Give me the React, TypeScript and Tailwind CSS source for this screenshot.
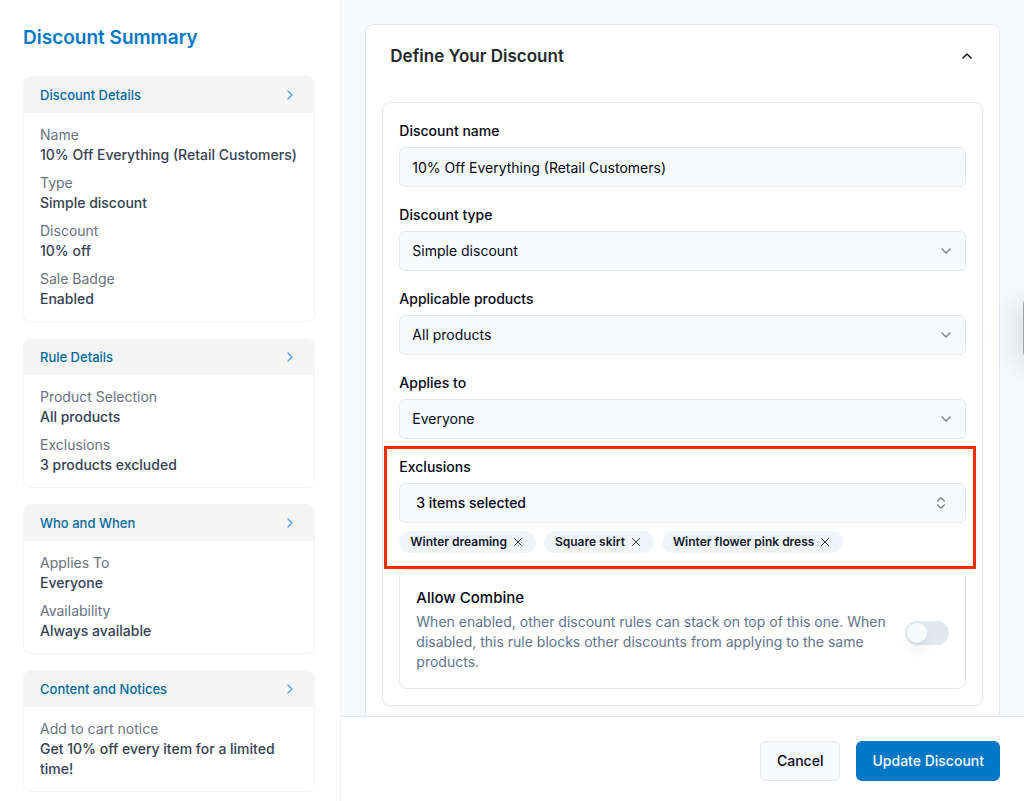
import { useState } from "react";
import { ChevronDown, ChevronRight, ChevronsUpDown, ChevronUp, X } from "lucide-react";

type SummarySection = {
  title: string;
  rows: { label: string; value: string }[];
};

const sections: SummarySection[] = [
  {
    title: "Discount Details",
    rows: [
      { label: "Name", value: "10% Off Everything (Retail Customers)" },
      { label: "Type", value: "Simple discount" },
      { label: "Discount", value: "10% off" },
      { label: "Sale Badge", value: "Enabled" },
    ],
  },
  {
    title: "Rule Details",
    rows: [
      { label: "Product Selection", value: "All products" },
      { label: "Exclusions", value: "3 products excluded" },
    ],
  },
  {
    title: "Who and When",
    rows: [
      { label: "Applies To", value: "Everyone" },
      { label: "Availability", value: "Always available" },
    ],
  },
  {
    title: "Content and Notices",
    rows: [{ label: "Add to cart notice", value: "Get 10% off every item for a limited time!" }],
  },
];

function SummaryCard({ title, rows }: SummarySection) {
  return (
    <section className="overflow-hidden rounded-lg border border-neutral-100">
      <button type="button" className="flex h-9 w-full items-center justify-between bg-neutral-100 px-4 text-left">
        <span className="text-[13px] leading-5 font-medium text-[#0369a1]">{title}</span>
        <ChevronRight className="size-4 text-blue-400" />
      </button>
      <dl className="flex flex-col gap-2 px-4 py-3 text-sm">
        {rows.map((row) => (
          <div key={row.label}>
            <dt className="text-gray-500">{row.label}</dt>
            <dd className="font-medium text-gray-700">{row.value}</dd>
          </div>
        ))}
      </dl>
    </section>
  );
}

function SelectField({ id, label, options }: { id: string; label: string; options: string[] }) {
  return (
    <div className="flex flex-col gap-1">
      <label htmlFor={id} className="text-sm leading-6 font-medium">
        {label}
      </label>
      <div className="relative">
        <select
          id={id}
          className="h-10 w-full appearance-none rounded-md border border-slate-200 bg-slate-50 px-3 text-sm"
        >
          {options.map((option) => (
            <option key={option}>{option}</option>
          ))}
        </select>
        <ChevronDown className="pointer-events-none absolute top-3 right-3 size-4 opacity-50" />
      </div>
    </div>
  );
}

export default function App() {
  const [name, setName] = useState("10% Off Everything (Retail Customers)");
  const [excluded, setExcluded] = useState(["Winter dreaming", "Square skirt", "Winter flower pink dress"]);
  const [combine, setCombine] = useState(false);

  return (
    <div className="relative flex h-screen overflow-hidden bg-white font-[Inter,sans-serif] text-slate-950">
      <aside className="w-1/3 shrink-0 overflow-hidden border-r border-slate-100 py-6 pr-[25px] pl-[23px]">
        <h2 className="mb-6 text-[19px] leading-7 font-semibold text-[#0078c5]">Discount Summary</h2>
        <div className="flex flex-col gap-4">
          {sections.map((section) => (
            <SummaryCard key={section.title} {...section} />
          ))}
        </div>
      </aside>

      <div className="flex min-w-0 flex-1 flex-col">
        <main className="min-h-0 flex-1 overflow-y-auto bg-slate-50 p-6 [scrollbar-width:none]">
          <div className="rounded-lg border border-slate-200 bg-white">
            <button type="button" className="flex h-[61px] w-full items-center justify-between px-6">
              <span className="text-[17px] leading-7 font-semibold text-[#23282d]">Define Your Discount</span>
              <ChevronUp className="size-4" />
            </button>

            <div className="p-4">
              <form className="flex flex-col gap-4 rounded-lg border border-slate-200 p-4 shadow-xs">
                <div className="flex flex-col gap-1">
                  <label htmlFor="name" className="text-sm leading-6 font-medium">
                    Discount name
                  </label>
                  <input
                    id="name"
                    type="text"
                    value={name}
                    onChange={(e) => setName(e.target.value)}
                    className="h-10 w-full rounded-md border border-slate-200 bg-slate-50 px-3 text-sm"
                  />
                </div>

                <SelectField id="type" label="Discount type" options={["Simple discount"]} />
                <SelectField id="products" label="Applicable products" options={["All products"]} />
                <SelectField id="audience" label="Applies to" options={["Everyone"]} />

                <div className="relative flex flex-col gap-1">
                  <label htmlFor="exclusions" className="text-sm leading-6 font-medium">
                    Exclusions
                  </label>
                  <button
                    id="exclusions"
                    type="button"
                    className="flex h-10 w-full items-center justify-between rounded-md border border-slate-200 bg-slate-50 px-4 text-sm font-medium"
                  >
                    {excluded.length} items selected
                    <ChevronsUpDown className="size-4 opacity-50" />
                  </button>
                  <div className="flex flex-wrap gap-2 pt-1">
                    {excluded.map((item) => (
                      <span
                        key={item}
                        className="flex items-center gap-1 rounded-full border border-transparent bg-slate-100 px-2.5 py-0.5 text-xs font-semibold text-slate-900"
                      >
                        {item}
                        <button
                          type="button"
                          aria-label={`Remove ${item}`}
                          onClick={() => setExcluded(excluded.filter((other) => other !== item))}
                        >
                          <X className="size-3.5" strokeWidth={1.5} />
                        </button>
                      </span>
                    ))}
                  </div>
                  <div className="pointer-events-none absolute -top-[9px] -right-[10px] -bottom-4 -left-[15px] z-10 border-3 border-[#ff2a00]" />
                </div>

                <div className="flex items-center justify-between gap-4 rounded-lg border border-slate-200 p-4">
                  <div className="flex flex-col gap-0.5">
                    <label htmlFor="combine" className="text-[15px] leading-6 font-medium">
                      Allow Combine
                    </label>
                    <p className="text-sm text-slate-500">
                      When enabled, other discount rules can stack on top of this one. When disabled, this rule blocks
                      other discounts from applying to the same products.
                    </p>
                  </div>
                  <div className="flex shrink-0 pt-2">
                    <input
                      id="combine"
                      type="checkbox"
                      role="switch"
                      checked={combine}
                      onChange={(e) => setCombine(e.target.checked)}
                      className="h-6 w-11 appearance-none rounded-full bg-slate-200 p-0.5 before:block before:size-5 before:rounded-full before:bg-slate-50 before:shadow-lg checked:bg-[#0078c5] checked:before:translate-x-5"
                    />
                  </div>
                </div>
              </form>
            </div>
          </div>
        </main>

        <footer className="flex justify-end gap-4 border-t border-slate-200 bg-white px-6 pt-6 pb-5">
          <button
            type="button"
            className="h-10 rounded-md border border-slate-200 bg-slate-50 px-4 text-sm font-medium"
          >
            Cancel
          </button>
          <button type="button" className="h-10 rounded-md bg-[#0078c5] px-4 text-sm font-medium text-slate-50">
            Update Discount
          </button>
        </footer>
      </div>

      {/* edge of the collapsed help tab */}
      <div className="pointer-events-none absolute top-[300px] -right-[39px] h-14 w-10 rounded-sm bg-neutral-400 shadow-[0_6px_40px_rgba(0,0,0,0.2)]" />
    </div>
  );
}
